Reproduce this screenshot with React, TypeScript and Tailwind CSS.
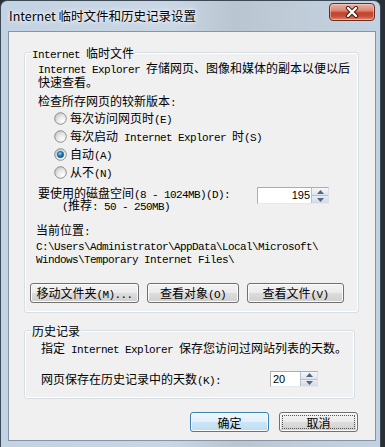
import React from "react";

const MONO = "[font-family:'Liberation_Mono',monospace] text-[11px] tracking-[-0.6px]";
const CJK = "[font-family:'Noto_Sans_CJK_SC',sans-serif] text-[12px]";

function Mix({ text }: { text: string }) {
  const parts = text.match(/[\x00-\x7F]+|[^\x00-\x7F]+/g) ?? [];
  return (
    <>
      {parts.map((p, i) =>
        /^[\x00-\x7F]/.test(p) ? (
          <span key={i} className={MONO}>
            {p}
          </span>
        ) : (
          <span key={i} className={CJK}>
            {p}
          </span>
        )
      )}
    </>
  );
}

function Line({ text, className = "" }: { text: string; className?: string }) {
  return (
    <div className={`whitespace-pre text-black ${className}`}>
      <Mix text={text} />
    </div>
  );
}

function Radio({ checked }: { checked?: boolean }) {
  return (
    <svg width="13" height="13" viewBox="0 0 13 13" className="shrink-0">
      <defs>
        <radialGradient id="rb" cx="0.7" cy="0.75" r="0.8">
          <stop offset="0" stopColor="#ffffff" />
          <stop offset="0.6" stopColor="#e6e6e6" />
          <stop offset="1" stopColor="#c2c5c9" />
        </radialGradient>
        <radialGradient id="rd" cx="0.4" cy="0.35" r="0.7">
          <stop offset="0" stopColor="#8fdcfa" />
          <stop offset="0.45" stopColor="#2a8ac8" />
          <stop offset="1" stopColor="#0b3d6e" />
        </radialGradient>
      </defs>
      <circle cx="6.5" cy="6.5" r="5.8" fill="url(#rb)" stroke="#8e8f8f" strokeWidth="1" />
      {checked && <circle cx="6.5" cy="6.5" r="3.2" fill="url(#rd)" stroke="#1b4f7e" strokeWidth="0.6" />}
    </svg>
  );
}

function Spin() {
  return (
    <div className="flex h-full w-[17px] flex-col border-l border-[#b8c2cc]">
      <div className="flex flex-1 items-center justify-center border-b border-[#b8c2cc] bg-[linear-gradient(#f6f7f9,#dfe4ea)]">
        <svg width="7" height="4" viewBox="0 0 7 4">
          <path d="M0 4 L3.5 0 L7 4 Z" fill="#4f6786" />
        </svg>
      </div>
      <div className="flex flex-1 items-center justify-center bg-[linear-gradient(#e9edf1,#d3dae3)]">
        <svg width="7" height="4" viewBox="0 0 7 4">
          <path d="M0 0 L3.5 4 L7 0 Z" fill="#4f6786" />
        </svg>
      </div>
    </div>
  );
}

function Button({
  label,
  w,
  primary,
  focus,
  className = "",
}: {
  label: string;
  w: string;
  primary?: boolean;
  focus?: boolean;
  className?: string;
}) {
  return (
    <div
      className={`relative flex h-[20px] items-center justify-center rounded-[3px] border ${
        primary
          ? "border-[#3c7fb1] bg-[linear-gradient(#eef7fd_0%,#e0f0fb_50%,#cde6f7_50%,#bcdcf2_100%)]"
          : "border-[#707070] bg-[linear-gradient(#f3f3f3_0%,#ebebeb_50%,#dddddd_50%,#cfcfcf_100%)]"
      } shadow-[inset_0_0_0_1px_#fbfbfb] ${w} ${className}`}
    >
      {focus && (
        <div className="pointer-events-none absolute inset-[2px] rounded-[1px] border border-dotted border-[#555]" />
      )}
      <span className="whitespace-pre leading-[14px] text-black">
        <Mix text={label} />
      </span>
    </div>
  );
}

export default function App() {
  return (
    <div className="relative h-[447px] w-[385px] overflow-hidden bg-[#2a2f35]">
      {/* window */}
      <div className="flex h-[447px] w-[381px] flex-col rounded-t-[7px] border border-b-0 border-[#3b4856] bg-[linear-gradient(90deg,#c3d3e3,#c9d6e3_45%,#b9c5d1_62%,#c0ccd8_78%,#c2d2e2)] pl-[7px] pr-[4px]">
        {/* title bar */}
        <div className="flex h-[30px] items-center">
          <div className="ml-[1px] whitespace-pre [font-family:'Noto_Sans_CJK_SC',sans-serif] text-[12.5px] text-black [text-shadow:0_0_6px_#ffffff,0_0_3px_#ffffff]">
            Internet 临时文件和历史记录设置
          </div>
          <div className="ml-auto mr-[1px] mt-[2px] flex h-[18px] w-[46px] items-center justify-center self-start rounded-[4px] border border-[#6a2a1f] bg-[linear-gradient(#eab4a6_0%,#dc8874_40%,#c4452f_55%,#c64a33_75%,#e08a70_100%)] shadow-[inset_0_0_0_1px_rgba(255,220,210,0.5)]">
            <svg width="14" height="12" viewBox="0 0 14 12">
              <path d="M3 2 L11 10 M11 2 L3 10" stroke="#3d1710" strokeWidth="4.2" strokeLinecap="round" />
              <path d="M3 2 L11 10 M11 2 L3 10" stroke="#ffffff" strokeWidth="2.4" strokeLinecap="round" />
            </svg>
          </div>
        </div>

        {/* client area */}
        <div className="flex h-[410px] w-[368px] flex-col border border-[#8695a5] bg-[#f0f0f0]">
          {/* group 1 */}
          <div className="relative ml-[15px] mt-[20px] flex h-[261px] w-[335px] flex-col rounded-[3px] border border-[#d5dfe5] shadow-[inset_0_0_0_1px_#ffffff]">
            <div className="absolute left-[6px] top-[-8px] bg-[#f0f0f0] px-[1px] leading-[14px]">
              <Line text="Internet 临时文件" />
            </div>
            <Line text="Internet Explorer 存储网页、图像和媒体的副本以便以后" className="ml-[13px] mt-[7px] h-[14px] leading-[14px]" />
            <Line text="快速查看。" className="ml-[13px] h-[14px] leading-[14px]" />
            <Line text="检查所存网页的较新版本:" className="ml-[13px] mt-[5px] h-[14px] leading-[14px]" />
            <div className="ml-[29px] mt-[2px] flex flex-col">
              {[
                ["每次访问网页时(E)", false],
                ["每次启动 Internet Explorer 时(S)", false],
                ["自动(A)", true],
                ["从不(N)", false],
              ].map(([t, c]) => (
                <div key={t as string} className="flex h-[18px] items-center gap-[3px]">
                  <Radio checked={c as boolean} />
                  <Line text={t as string} className="leading-[14px]" />
                </div>
              ))}
            </div>
            <div className="mt-[5px] flex">
              <div className="ml-[13px] flex flex-col">
                <Line text="要使用的磁盘空间(8 - 1024MB)(D):" className="h-[12px] leading-[12px]" />
                <Line text="(推荐: 50 - 250MB)" className="ml-[24px] h-[12px] leading-[12px]" />
              </div>
              <div className="ml-auto mr-[29px] mt-[1px] flex h-[17px] w-[72px] border border-[#abadb3] border-r-[#dbdfe6] border-b-[#e3e9ef] bg-white">
                <div className="flex-1 pr-[1px] text-right [font-family:'Liberation_Sans',sans-serif] text-[11px] leading-[15px] text-black">
                  195
                </div>
                <Spin />
              </div>
            </div>
            <Line text="当前位置:" className="ml-[11px] mt-[12px] h-[14px] leading-[14px]" />
            <Line text="C:\Users\Administrator\AppData\Local\Microsoft\" className="ml-[11px] mt-[2px] h-[13px] leading-[13px]" />
            <Line text="Windows\Temporary Internet Files\" className="ml-[11px] h-[13px] leading-[13px]" />
            <div className="ml-[5px] mt-[19px] flex gap-[8px]">
              <Button label="移动文件夹(M)..." w="w-[109px]" />
              <Button label="查看对象(O)" w="w-[92px]" />
              <Button label="查看文件(V)" w="w-[97px]" />
            </div>
          </div>

          {/* group 2 */}
          <div className="relative ml-[15px] mt-[17px] flex h-[69px] w-[331px] flex-col rounded-[3px] border border-[#d5dfe5] shadow-[inset_0_0_0_1px_#ffffff]">
            <div className="absolute left-[6px] top-[-8px] bg-[#f0f0f0] px-[1px] leading-[14px]">
              <Line text="历史记录" />
            </div>
            <Line text="指定 Internet Explorer 保存您访问过网站列表的天数。" className="ml-[16px] mt-[9px] h-[14px] leading-[14px]" />
            <div className="mt-[17px] flex h-[16px] items-center">
              <Line text="网页保存在历史记录中的天数(K):" className="ml-[16px] leading-[14px]" />
              <div className="ml-auto mr-[36px] flex h-[16px] w-[48px] border border-[#abadb3] border-r-[#dbdfe6] border-b-[#e3e9ef] bg-white">
                <div className="flex-1 pl-[2px] [font-family:'Liberation_Sans',sans-serif] text-[11px] leading-[14px] text-black">
                  20
                </div>
                <Spin />
              </div>
            </div>
          </div>

          {/* dialog buttons */}
          <div className="mr-[17px] mt-[13px] flex justify-end gap-[10px]">
            <Button label="确定" w="w-[79px]" primary />
            <Button label="取消" w="w-[79px]" focus />
          </div>
        </div>
      </div>
    </div>
  );
}
